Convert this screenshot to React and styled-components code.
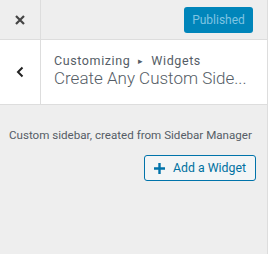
import React from "react";
import styled, { createGlobalStyle } from "styled-components";

const Global = createGlobalStyle`
  html, body { margin: 0; padding: 0; background: #eee; }
  body { font-family: Roboto, "Noto Sans", sans-serif; }
`;

const Panel = styled.div`
  width: 267px;
  height: 254px;
  background: #eee;
  border-right: 1px solid #ddd;
  display: flex;
  flex-direction: column;
  overflow: hidden;
`;

const Header = styled.div`
  height: 39px;
  border-bottom: 1px solid #ddd;
  display: flex;
  align-items: center;
  justify-content: space-between;
`;

const CloseBtn = styled.div`
  width: 40px;
  height: 39px;
  border-right: 1px solid #ddd;
  display: flex;
  align-items: center;
  justify-content: center;
`;

const PublishBtn = styled.div`
  margin-right: 14px;
  width: 69px;
  height: 26px;
  box-sizing: border-box;
  border-radius: 3px;
  background: #0085ba;
  color: #7fc4e2;
  font-size: 12px;
  display: flex;
  align-items: center;
  justify-content: center;
`;

const TitleRow = styled.div`
  display: flex;
  background: #fff;
  border-bottom: 1px solid #ddd;
  height: 64px;
`;

const BackBtn = styled.div`
  width: 40px;
  flex-shrink: 0;
  border-right: 1px solid #ddd;
  display: flex;
  align-items: center;
  justify-content: center;
`;

const TitleText = styled.div`
  padding: 14px 0 0 13px;
  display: flex;
  flex-direction: column;
  min-width: 0;
`;

const Crumb = styled.div`
  font-size: 12.5px;
  color: #555d66;
  line-height: 14px;
  letter-spacing: 0.6px;
  word-spacing: 4px;
`;

const Arrow = styled.span`
  font-size: 9px;
  vertical-align: 1px;
`;

const Title = styled.div`
  font-size: 17px;
  font-weight: 300;
  color: #555d66;
  line-height: 20px;
  white-space: nowrap;
`;

const Content = styled.div`
  padding: 20px 11px 0 9px;
  display: flex;
  flex-direction: column;
  align-items: flex-end;
`;

const Desc = styled.div`
  align-self: flex-start;
  font-size: 11.6px;
  color: #555d66;
  line-height: 20px;
  white-space: nowrap;
`;

const AddBtn = styled.div`
  margin-top: 10px;
  width: 112px;
  height: 26px;
  box-sizing: border-box;
  border: 1px solid #0073aa;
  border-radius: 3px;
  background: #f3f5f6;
  color: #0071a1;
  font-size: 12.3px;
  display: flex;
  align-items: center;
  justify-content: center;
  gap: 8px;
`;

export default function App() {
  return (
    <>
      <Global />
      <Panel>
        <Header>
          <CloseBtn>
            <svg width="10" height="10" viewBox="0 0 10 10">
              <path d="M1 1L9 9M9 1L1 9" stroke="#444" strokeWidth="2.2" />
            </svg>
          </CloseBtn>
          <PublishBtn>Published</PublishBtn>
        </Header>
        <TitleRow>
          <BackBtn>
            <svg width="8" height="12" viewBox="0 0 8 12">
              <path d="M6.5 1.5L2 6l4.5 4.5" stroke="#222" strokeWidth="2" fill="none" />
            </svg>
          </BackBtn>
          <TitleText>
            <Crumb>
              Customizing <Arrow>▸</Arrow> Widgets
            </Crumb>
            <Title>Create Any Custom Side...</Title>
          </TitleText>
        </TitleRow>
        <Content>
          <Desc>Custom sidebar, created from Sidebar Manager</Desc>
          <AddBtn>
            <svg width="11" height="11" viewBox="0 0 11 11">
              <path d="M5.5 0v11M0 5.5h11" stroke="#0073aa" strokeWidth="2.4" />
            </svg>
            Add a Widget
          </AddBtn>
        </Content>
      </Panel>
    </>
  );
}
